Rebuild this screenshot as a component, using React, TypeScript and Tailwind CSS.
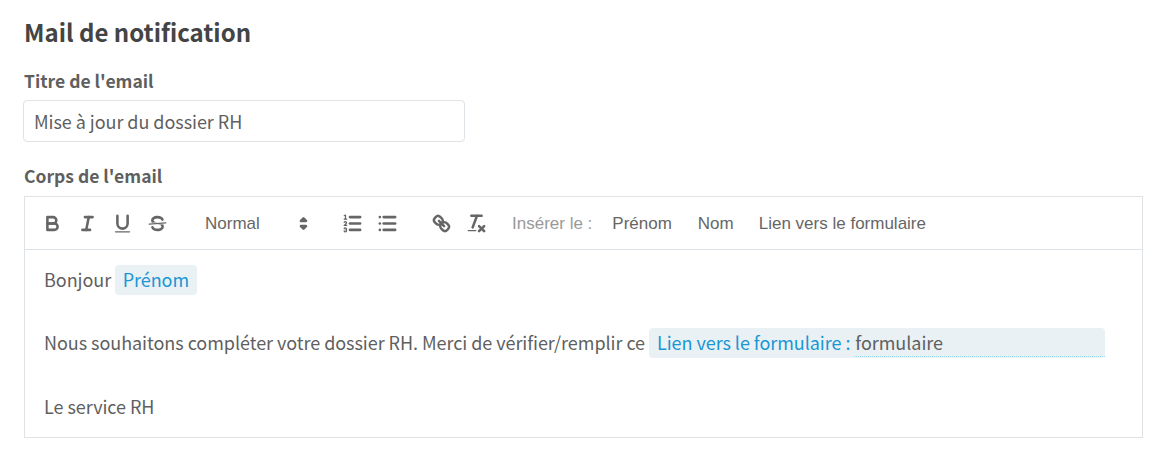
import React from 'react';

const iconClass = 'w-[23px] h-[23px] shrink-0 fill-none stroke-[#666] stroke-2 [stroke-linecap:round] [stroke-linejoin:round]';

const ToolButton: React.FC<{ children: React.ReactNode }> = ({ children }) => (
  <button type="button" className="flex h-6 w-[28px] items-center justify-center">
    <svg viewBox="0 0 18 18" className={iconClass}>
      {children}
    </svg>
  </button>
);

const Token: React.FC<{ children: React.ReactNode }> = ({ children }) => (
  <span className="inline-block h-[30px] rounded-[4px] bg-[#e9f1f5] px-[7.5px] leading-[28px] text-[#1a96d4]">{children}</span>
);

const App: React.FC = () => {
  return (
    <div className="h-[458px] w-[1161px] bg-white pl-6 pr-[18px] pt-[14px] font-['Noto_Sans_CJK_SC','Noto_Sans',sans-serif] text-[#5f5f5f]">
      <h2 className="text-[24px] font-semibold leading-[36px] text-[#444]">Mail de notification</h2>

      <label className="mt-[19px] block text-[17.5px] font-semibold leading-[24px] text-[#5f5f5f]">Titre de l'email</label>
      <input
        readOnly
        defaultValue="Mise à jour du dossier RH"
        className="-ml-px mt-[7px] block h-[42px] w-[442px] rounded-[4px] border border-[#dde3e6] px-[10px] text-[18px] tracking-[-0.05px] text-[#5f5f5f] outline-none"
      />

      <label className="mt-[22px] block text-[17.5px] font-semibold leading-[24px] text-[#5f5f5f]">Corps de l'email</label>

      <div className="mt-[8px] h-[242px] border border-[#dde3e6]">
        {/* Toolbar */}
        <div className="flex h-[53px] items-center border-b border-[#dde3e6] pl-[13px] font-['Liberation_Sans',Arial,sans-serif] text-[17px] text-[#666]">
          <div className="flex gap-[7px]">
            <ToolButton>
              <path d="M5,4H9.5A2.5,2.5,0,0,1,12,6.5v0A2.5,2.5,0,0,1,9.5,9H5A0,0,0,0,1,5,9V4A0,0,0,0,1,5,4Z" />
              <path d="M5,9h5.5A2.5,2.5,0,0,1,13,11.5v0A2.5,2.5,0,0,1,10.5,14H5a0,0,0,0,1,0,0V9A0,0,0,0,1,5,9Z" />
            </ToolButton>
            <ToolButton>
              <line x1="7" x2="13" y1="4" y2="4" />
              <line x1="5" x2="11" y1="14" y2="14" />
              <line x1="8" x2="10" y1="14" y2="4" />
            </ToolButton>
            <ToolButton>
              <path d="M5,3V9a4.012,4.012,0,0,0,4,4H9a4.012,4.012,0,0,0,4-4V3" />
              <rect className="fill-[#666] stroke-0" height="1" rx="0.5" ry="0.5" width="12" x="3" y="15" />
            </ToolButton>
            <ToolButton>
              <line className="stroke-1" x1="15.5" x2="2.5" y1="8.5" y2="9.5" />
              <path className="fill-[#666] stroke-0" d="M9.007,8C6.542,7.791,6,7.519,6,6.5,6,5.792,7.283,5,9,5c1.571,0,2.765.679,2.969,1.309a1,1,0,0,0,1.9-.617C13.356,4.106,11.354,3,9,3,6.2,3,4,4.538,4,6.5a3.2,3.2,0,0,0,.5,1.843Z" />
              <path className="fill-[#666] stroke-0" d="M8.984,10C11.457,10.208,12,10.479,12,11.5c0,.708-1.283,1.5-3,1.5-1.571,0-2.765-.679-2.969-1.309a1,1,0,1,0-1.9.617C4.644,13.894,6.646,15,9,15c2.8,0,5-1.538,5-3.5a3.2,3.2,0,0,0-.5-1.843Z" />
            </ToolButton>
          </div>

          {/* Format picker */}
          <div className="ml-[34px] flex w-[110px] items-center justify-between">
            <span className="mt-[2px]">Normal</span>
            <svg viewBox="0 0 18 18" className="h-[23px] w-[23px] fill-[#666] stroke-[#666] stroke-2 [stroke-linejoin:round]">
              <polygon points="7 11 9 13 11 11 7 11" />
              <polygon points="7 7 9 5 11 7 7 7" />
            </svg>
          </div>

          <div className="ml-[23px] flex gap-[7px]">
            <ToolButton>
              <line x1="7" x2="15" y1="4" y2="4" />
              <line x1="7" x2="15" y1="9" y2="9" />
              <line x1="7" x2="15" y1="14" y2="14" />
              <line className="stroke-1" x1="2.5" x2="4.5" y1="5.5" y2="5.5" />
              <path className="fill-[#666] stroke-0" d="M3.5,6A0.5,0.5,0,0,1,3,5.5V3.085l-0.276.138A0.5,0.5,0,0,1,2.053,3c-0.124-.247-0.023-0.324.224-0.447l1-.5A0.5,0.5,0,0,1,4,2.5v3A0.5,0.5,0,0,1,3.5,6Z" />
              <path className="stroke-1" d="M4.5,10.5h-2c0-.234,1.85-1.076,1.85-2.234A0.959,0.959,0,0,0,2.5,8.156" />
              <path className="stroke-1" d="M2.5,14.846a0.959,0.959,0,0,0,1.85-.109A0.7,0.7,0,0,0,3.75,14a0.688,0.688,0,0,0,.6-0.736,0.959,0.959,0,0,0-1.85-.109" />
            </ToolButton>
            <ToolButton>
              <line x1="6" x2="15" y1="4" y2="4" />
              <line x1="6" x2="15" y1="9" y2="9" />
              <line x1="6" x2="15" y1="14" y2="14" />
              <line x1="3" x2="3" y1="4" y2="4" />
              <line x1="3" x2="3" y1="9" y2="9" />
              <line x1="3" x2="3" y1="14" y2="14" />
            </ToolButton>
          </div>

          <div className="ml-[26px] flex gap-[7px]">
            <ToolButton>
              <line x1="7" x2="11" y1="7" y2="11" />
              <path d="M8.9,4.577a3.476,3.476,0,0,1,.36,4.679A3.476,3.476,0,0,1,4.577,8.9C3.185,7.5,2.035,6.4,4.217,4.217S7.5,3.185,8.9,4.577Z" />
              <path d="M13.423,9.1a3.476,3.476,0,0,0-4.679-.36,3.476,3.476,0,0,0,.36,4.679c1.392,1.392,2.5,2.542,4.679.36S14.815,10.5,13.423,9.1Z" />
            </ToolButton>
            <ToolButton>
              <line x1="5" x2="13" y1="3" y2="3" />
              <line x1="6" x2="9.35" y1="12" y2="3" />
              <line x1="11" x2="15" y1="11" y2="15" />
              <line x1="15" x2="11" y1="11" y2="15" />
              <rect className="fill-[#666] stroke-0" height="1" rx="0.5" ry="0.5" width="7" x="2" y="14" />
            </ToolButton>
          </div>

          <span className="ml-[22px] mt-[2px] text-[#999]">Insérer le :</span>
          <span className="ml-[20px] mt-[2px]">Prénom</span>
          <span className="ml-[26px] mt-[2px]">Nom</span>
          <span className="ml-[25px] mt-[2px]">Lien vers le formulaire</span>
        </div>

        {/* Editor content */}
        <div className="pl-[19px] pr-[37px] pt-[15px] text-[18px] tracking-[-0.05px]">
          <p className="flex h-[30px] items-start gap-1 leading-[28px]">
            Bonjour <Token>Prénom</Token>
          </p>
          <p className="mt-[33px] flex h-[30px] items-start gap-1 leading-[28px]">
            <span className="whitespace-nowrap">Nous souhaitons compléter votre dossier RH. Merci de vérifier/remplir ce</span>
            <span className="flex h-[30px] flex-1 rounded-[4px] bg-[#e9f1f5] pl-2 leading-[28px]">
              <span className="whitespace-nowrap text-[#1a96d4]">Lien vers le formulaire :</span>
              <span className="ml-[4px] h-[29px] flex-1 border-b border-dotted border-[#9adcf5] pl-[1px]">formulaire</span>
            </span>
          </p>
          <p className="mt-[33px] leading-[30px]">Le service RH</p>
        </div>
      </div>
    </div>
  );
};

export default App;
